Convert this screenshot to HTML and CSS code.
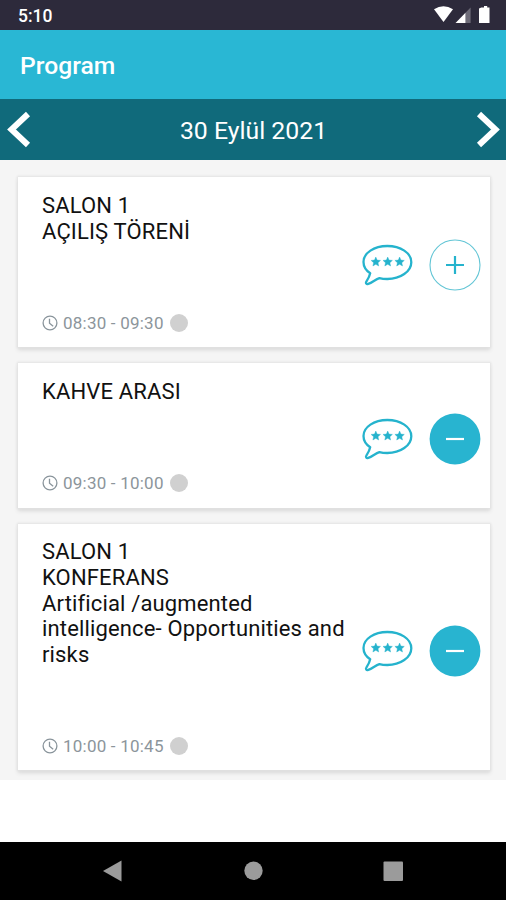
FILE: index.html
```html
<!DOCTYPE html>
<html lang="tr">
<head>
<meta charset="utf-8">
<title>Program</title>
<link rel="stylesheet" href="styles.css">
</head>
<body>
<svg class="defs" width="0" height="0">
  <symbol id="bubble" viewBox="0 -0.7 52 44">
    <path d="M9.2 29.6C4.800 26.500 2.500 22.500 2.500 18.200C2.500 9.400 13 2.300 26.300 2.300S50.300 9.300 50.300 18.500S39.500 35.300 26.300 35.300C23.300 35.300 20.700 35 18.400 34.400C14.500 35.500 11.500 38.800 7.300 40.200C5.200 40.800 4.400 39.200 5.500 37.600C6.700 35.800 8.600 32.500 9.200 29.600Z" fill="none" stroke="#25b3cd" stroke-width="2.300" stroke-linejoin="round"/>
    <g fill="#25b3cd" stroke="#25b3cd" stroke-width=".4">
      <path id="star" d="M14.800 13.300L16.100 16.400L19.500 16.700L17 19L17.700 22.300L14.800 20.600L11.900 22.300L12.600 19L10.100 16.700L13.500 16.400Z"/>
      <use href="#star" x="11.900"/>
      <use href="#star" x="23.800"/>
    </g>
  </symbol>
  <symbol id="clock" viewBox="0 0 16 16">
    <g fill="none" stroke="#89949b" stroke-width="1.300"><circle cx="8" cy="8" r="6.900"/><path d="M7.500 3.800V8.300L11.200 11.300"/></g>
  </symbol>
</svg>
<header class="status">
  <span>5:10</span>
  <svg width="60" height="20" viewBox="0 0 60 20">
    <path d="M1 4.300Q10.500-1.800 20 4.300L10.500 17Z" fill="#fff"/>
    <path d="M37.600 2.500V18H32.500V7.800Z" fill="#6d6b78"/>
    <path d="M32.500 7.800V18H22.500Z" fill="#fff"/>
    <path d="M48.300 2.500H51V1H54.200V2.500H56.500V18H46V3.500Z" fill="#fff"/>
  </svg>
</header>
<div class="appbar"><h1>Program</h1></div>
<nav class="datebar">
  <svg width="24" height="38" viewBox="0 0 24 38"><path d="M21 3L4.500 18.500L21 34" fill="none" stroke="#fff" stroke-width="6"/></svg>
  <span>30 Eylül 2021</span>
  <svg width="24" height="38" viewBox="0 0 24 38"><path d="M3 3L19.500 18.500L3 34" fill="none" stroke="#fff" stroke-width="6"/></svg>
</nav>
<main class="list">
  <article class="card first">
    <div class="info">
      <h2>SALON 1<br>AÇILIŞ TÖRENİ</h2>
      <div class="time"><svg width="16" height="16"><use href="#clock"/></svg><span>08:30 - 09:30</span><i></i></div>
    </div>
    <div class="actions">
      <svg width="52" height="44"><use href="#bubble"/></svg>
      <svg width="52" height="52" viewBox="0 0 52 52"><circle cx="26" cy="26" r="25" fill="none" stroke="#62c5d5" stroke-width="1.100"/><path d="M17 26H35M26 17V35" stroke="#25b3cd" stroke-width="2.200"/></svg>
    </div>
  </article>
  <article class="card second">
    <div class="info">
      <h2>KAHVE ARASI</h2>
      <div class="time"><svg width="16" height="16"><use href="#clock"/></svg><span>09:30 - 10:00</span><i></i></div>
    </div>
    <div class="actions">
      <svg width="52" height="44"><use href="#bubble"/></svg>
      <svg width="52" height="52" viewBox="0 0 52 52"><circle cx="26" cy="26" r="25.400" fill="#28b4d0"/><path d="M17 26H35" stroke="#fff" stroke-width="2.200"/></svg>
    </div>
  </article>
  <article class="card third">
    <div class="info">
      <h2>SALON 1<br>KONFERANS<br>Artificial /augmented<br>intelligence- Opportunities and<br>risks</h2>
      <div class="time"><svg width="16" height="16"><use href="#clock"/></svg><span>10:00 - 10:45</span><i></i></div>
    </div>
    <div class="actions">
      <svg width="52" height="44"><use href="#bubble"/></svg>
      <svg width="52" height="52" viewBox="0 0 52 52"><circle cx="26" cy="26" r="25.400" fill="#28b4d0"/><path d="M17 26H35" stroke="#fff" stroke-width="2.200"/></svg>
    </div>
  </article>
</main>
<footer class="navbar">
  <svg width="506" height="58" viewBox="0 0 506 58" fill="#9b9b9b"><path d="M103 29L121.500 18.500V39.500Z"/><circle cx="253.500" cy="28.800" r="9.200"/><rect x="383.500" y="19.500" width="19.500" height="19.500" rx="1"/></svg>
</footer>
</body>
</html>
```
FILE: styles.css
```css
* { box-sizing: border-box; }
body {
  margin: 0;
  width: 506px;
  height: 900px;
  overflow: hidden;
  display: flex;
  flex-direction: column;
  background: #fff;
  font-family: Roboto, "Liberation Sans", sans-serif;
}
svg { display: block; flex: none; }
.defs { position: absolute; }
.status {
  height: 30px;
  background: #2d2a3b;
  color: #fff;
  display: flex;
  justify-content: space-between;
  padding: 5px 13px 0 18px;
  font-size: 17.5px;
  font-weight: 500;
  line-height: 22px;
}
.appbar {
  height: 69px;
  background: #29b7d4;
  padding: 0 20px;
  display: flex;
  align-items: center;
}
.appbar h1 {
  margin: 2px 0 0;
  color: #fff;
  font-size: 24.7px;
  font-weight: 500;
  line-height: 30px;
}
.datebar {
  height: 61px;
  background: #106a7b;
  color: #fff;
  display: flex;
  align-items: center;
  justify-content: space-between;
  padding: 1px 6px 0 7px;
  font-size: 24.8px;
}
.list {
  height: 620px;
  overflow: hidden;
  background: #f5f5f5;
  padding: 17px 16px 0 18px;
  display: flex;
  flex-direction: column;
  gap: 16px;
}
.card {
  flex: none;
  background: #fff;
  box-shadow: 0 0 2px 1px #e2e2e2, 0 3px 4px #d8d8d8;
  display: flex;
  justify-content: space-between;
  padding: 16px 9px 15px 24px;
}
.first { height: 170px; padding-bottom: 14px; }
.second { height: 145px; }
.third { height: 246px; padding: 15px 9px 14px 24px; }
.info {
  display: flex;
  flex-direction: column;
  justify-content: space-between;
}
.info h2 {
  margin: 0;
  color: #111;
  font-size: 22px;
  font-weight: 400;
  line-height: 25.8px;
  letter-spacing: 0.15px;
  white-space: nowrap;
}
.time {
  display: flex;
  align-items: center;
  height: 20px;
  color: #8c959b;
  font-size: 17px;
}
.time span { margin: 0 6px 0 5px; letter-spacing: 0.22px; }
.time i {
  width: 18px;
  height: 18px;
  border-radius: 50%;
  background: #d0d0d0;
}
.actions {
  display: flex;
  align-items: center;
  gap: 16px;
  align-self: center;
  margin-top: 5px;
}
.first .actions { margin-top: 4px; }
.third .actions { margin-top: 7px; }
.navbar {
  height: 58px;
  margin-top: auto;
  background: #000;
}
```
